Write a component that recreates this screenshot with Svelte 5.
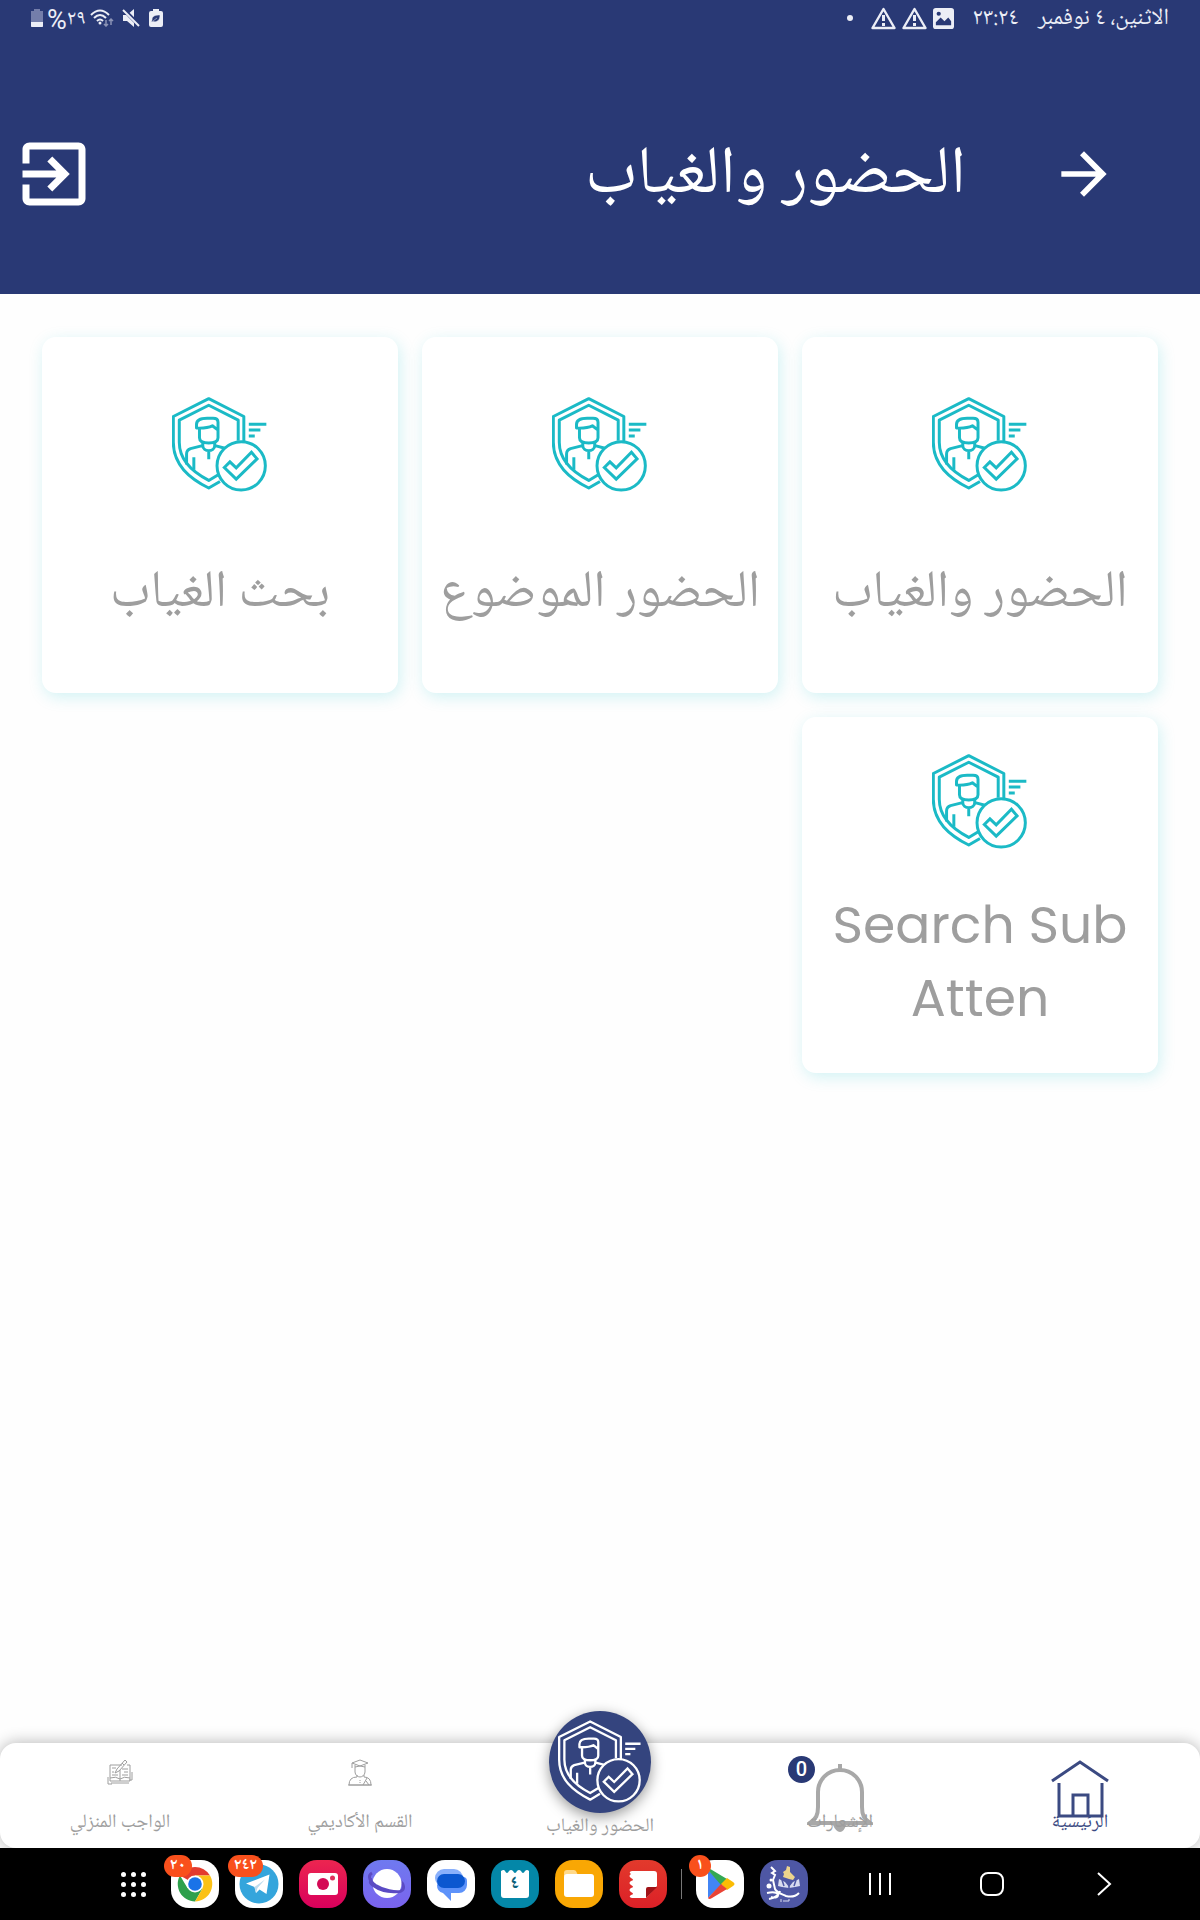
<script lang="ts">
  interface Card {
    title: string;
    latin?: boolean;
  }

  interface Tab {
    id: string;
    label: string;
    badge?: string;
  }

  interface DockApp {
    id: string;
    name: string;
    badge?: string;
  }

  const cards: Card[] = [
    { title: "الحضور والغياب" },
    { title: "الحضور الموضوع" },
    { title: "بحث الغياب" },
    { title: "Search Sub Atten", latin: true },
  ];

  const tabs: Tab[] = [
    { id: "home", label: "الرئيسية" },
    { id: "alerts", label: "الإشعارات", badge: "0" },
    { id: "attendance", label: "الحضور والغياب" },
    { id: "academic", label: "القسم الأكاديمي" },
    { id: "homework", label: "الواجب المنزلي" },
  ];

  const pinned: DockApp[] = [
    { id: "chrome", name: "Chrome", badge: "٢٠" },
    { id: "telegram", name: "Telegram", badge: "٢٤٢" },
    { id: "camera", name: "Camera" },
    { id: "internet", name: "Internet" },
    { id: "messages", name: "Messages" },
    { id: "calendar", name: "Calendar" },
    { id: "files", name: "Files" },
    { id: "notes", name: "Notes" },
  ];

  const recent: DockApp[] = [
    { id: "play", name: "Play Store", badge: "١" },
    { id: "school", name: "School" },
  ];
</script>

{#snippet shield()}
  <svg class="shield" viewBox="96 52 290 290" aria-hidden="true">
    <path d="M313 188V111L207 57 100 111v78c0 68 48 108 107 138l34-20" />
    <path d="M296 184V122L207 77 118 122v67c0 56 40 90 89 115l30-18" />
    <path d="M179 146h-9v-11c0-13 14-19 32-19h18c10 0 15 5 15 12v24l-17-13c-12 6-24 7-39 7v29c0 11 11 16 28 16s28-5 28-16v-27" />
    <path d="M189 190v9c0 9 9 15 18 15s18-6 18-15v-9M207 214v26M188 199l-36 9c-8 3-12 9-12 16v32M226 199l30 8M162 234v38" />
    <circle class="disc" cx="305" cy="260" r="73" />
    <path class="sharp" d="M254 265l17-17 19 18 46-47 17 20-63 61z" />
    <path d="M328 134h53M328 152h35M328 170h18" />
  </svg>
{/snippet}

{#snippet dockIcon(app: DockApp)}
  <button class="app {app.id}" aria-label={app.name}>
    {#if app.id === "chrome"}
      <svg viewBox="0 0 48 48">
        <path d="M24 24L9 15.400A17.500 17.500 0 0 1 39 15.400H24z" fill="#e33b2e" />
        <path d="M24 24l-7.400 4.300L9 15.400A17.500 17.500 0 0 0 24 41.500l7.500-13z" fill="#2da04c" />
        <path d="M39 15.400A17.500 17.500 0 0 1 24 41.500l7.500-13L24 15.400z" fill="#fbc116" />
        <circle cx="24" cy="24" r="8.500" fill="#fff" />
        <circle cx="24" cy="24" r="6.800" fill="#1a73e8" />
      </svg>
    {:else if app.id === "telegram"}
      <svg viewBox="0 0 48 48">
        <circle cx="24" cy="24" r="19.500" fill="#34a5dc" />
        <path d="M11 23.500L34.500 14.500 31.500 34 24.500 29.500 21 33 19.500 27z" fill="#fff" />
        <path d="M19.500 27L30 19.500 22.500 28 21 33z" fill="#bcdcee" />
      </svg>
    {:else if app.id === "camera"}
      <svg viewBox="0 0 48 48">
        <rect x="9" y="13" width="30" height="22" rx="3" fill="#fff" />
        <circle cx="24" cy="24" r="6" fill="#d40a55" />
        <circle cx="33.500" cy="18" r="2.500" fill="#e0305c" />
      </svg>
    {:else if app.id === "internet"}
      <svg viewBox="0 0 48 48">
        <path d="M9 13c-5 3-2 9 4 12 8 5 20 8 25 6 4-2 3-7-1-10" fill="none" stroke="#5b4bc4" stroke-width="3" />
        <circle cx="24" cy="23.500" r="14.500" fill="#fff" />
        <path d="M8 18c-1 3 2 5 5 7 8 5 19 7 25 6l-2 1c-9 1-19-1-26-6-3-2-4-5-2-8z" fill="#5b4bc4" stroke="#5b4bc4" stroke-width="2" />
      </svg>
    {:else if app.id === "messages"}
      <svg viewBox="0 0 48 48">
        <rect x="8" y="9" width="28" height="18" rx="9" fill="#8ab0fb" />
        <path d="M16 17h20a4 4 0 0 1 4 4v4a8 8 0 0 1-8 8h-8v8l-8-8a8 8 0 0 1-6-8z" fill="#5d92fa" />
        <rect x="10" y="14" width="28" height="14" rx="7" fill="#0b57d0" />
      </svg>
    {:else if app.id === "calendar"}
      <svg viewBox="0 0 48 48">
        <path d="M10 11q3-2 4 0 2 4 4 0 2-2 4 0 2 4 4 0 2-2 4 0 2 4 4 0 2-2 4 0v24q0 3-3 3H13q-3 0-3-3z" fill="#fff" />
      </svg>
      <span class="day">٤</span>
    {:else if app.id === "files"}
      <svg viewBox="0 0 48 48">
        <path d="M9 13q0-3 3-3h7q2 0 3 3l1 3H9z" fill="#ffd98a" />
        <rect x="9" y="14" width="30" height="23" rx="3" fill="#fff" />
      </svg>
    {:else if app.id === "notes"}
      <svg viewBox="0 0 48 48">
        <path d="M13 11h22q3 0 3 3v12L27 38H13q-4-1-1-3 4-1 0-3-3-2 0-4 4-1 0-3-3-2 0-4 4-1 0-3-3-2 0-4-3-2 1-3z" fill="#fff" />
        <path d="M27 38V29q0-2 2-2h9z" fill="#a01217" />
      </svg>
    {:else if app.id === "play"}
      <svg viewBox="0 0 48 48">
        <path d="M12 10v28l14-14z" fill="#4285f4" />
        <path d="M12 10q1-2 4 0l15 9-6 6z" fill="#34a853" />
        <path d="M31 18l6 4q3 2 0 4l-6 4-6-6z" fill="#fbbc04" />
        <path d="M12 38q1 2 4 0l15-9-6-5z" fill="#ea4335" />
      </svg>
    {:else}
      <svg viewBox="0 0 48 48">
        <path d="M27 6l3 1v5l5 5-2 3-4-1-6-2 1-3-1-2 3-2z" fill="#ecd48c" />
        <path d="M19 19l6 3 4 5 4-5 6-3 1 7-5 1-6 1-7-1-4-1z" fill="#d9dcf0" />
        <path d="M29 28v-8M22 20l2 6M36 20l-2 6" fill="none" stroke="#4e57a4" stroke-width="1.500" />
        <path d="M11 7l4 4-3 2 3 2-2 5 2 9c2 4 7 5 11 7 4 1 9 1 13-3" fill="none" stroke="#fff" stroke-width="2" />
        <path d="M7 33c5-1 10-1 11 2 0 3-4 3-7 2M9 39c5-1 10-4 11-8" fill="none" stroke="#fff" stroke-width="2" />
        <circle cx="9" cy="26" r="2.500" fill="#fff" />
        <circle cx="11" cy="20" r="1.500" fill="#fff" />
        <path d="M21 39v3M23 41h6v-2" fill="none" stroke="#d9dcf0" stroke-width="1" />
      </svg>
    {/if}
    {#if app.badge}
      <span class="count">{app.badge}</span>
    {/if}
  </button>
{/snippet}

<div class="screen" dir="rtl">
  <header>
    <div class="status">
      <div class="status-group">
        <span>الاثنين، ٤ نوفمبر</span>
        <span class="time">٢٣:٢٤</span>
        <svg class="picture" viewBox="0 0 22 22" aria-hidden="true">
          <rect width="22" height="22" rx="3" fill="currentColor" />
          <circle cx="6" cy="6" r="2.200" fill="#293975" />
          <path d="M3 18v-3l5-5 4 4 4-4 3 4v4z" fill="#293975" />
        </svg>
        {#each Array(2) as _}
          <svg class="warning" viewBox="0 0 25 23" aria-hidden="true">
            <path d="M12.500 2L23.500 21h-22z" fill="none" stroke="currentColor" stroke-width="2.400" stroke-linejoin="round" />
            <path d="M12.500 8v6M12.500 16v3" stroke="currentColor" stroke-width="3" />
          </svg>
        {/each}
        <i class="more"></i>
      </div>
      <div class="status-group system">
        <svg class="saver" viewBox="0 0 14 18" aria-hidden="true">
          <path d="M4 0h6v2h2q2 0 2 2v12q0 2-2 2H2q-2 0-2-2V4q0-2 2-2h2z" fill="currentColor" />
          <path d="M11 6c-5 0-8 1-8 5q0 1-1 2l2-.5c4 1 7-1 7-6.500zM4 12l4-3" fill="#293975" stroke="currentColor" stroke-width=".5" />
        </svg>
        <svg class="mute" viewBox="0 0 18 18" aria-hidden="true">
          <path d="M1 6h4l7-6v18l-7-6H1z" fill="currentColor" />
          <path d="M1 0l17 17" stroke="#293975" stroke-width="4" />
          <path d="M1 1l16 16" stroke="currentColor" stroke-width="2" />
        </svg>
        <svg class="wifi" viewBox="0 0 25 18" aria-hidden="true">
          <path d="M1 6q9-9 18 0M4 9q6-6 12 0M7 12q3-3 6 0" fill="none" stroke="currentColor" stroke-width="2" />
          <circle cx="10" cy="14" r="1.500" fill="currentColor" />
          <path d="M16 11v6m-2-2l2 2 2-2M21 16v-6m-2 2l2-2 2 2" fill="none" stroke="#8b93b5" stroke-width="1.500" />
        </svg>
        <span class="level">٢٩<span class="percent">%</span></span>
        <svg class="battery" viewBox="0 0 12 18" aria-hidden="true">
          <path d="M3 0h6v2h3v16H0V2h3z" fill="#747eaa" />
          <path d="M0 13h12v4q0 1-1 1H1q-1 0-1-1z" fill="currentColor" />
        </svg>
      </div>
    </div>
    <div class="app-bar">
      <button class="back" aria-label="رجوع">
        <svg viewBox="0 0 24 24"><path d="M12 4l-1.410 1.410L16.170 11H4v2h12.170l-5.580 5.590L12 20l8-8z" /></svg>
      </button>
      <h1>الحضور والغياب</h1>
      <button class="exit" aria-label="خروج">
        <svg viewBox="0 0 24 24">
          <path d="M10.090 15.590L11.500 17l5-5-5-5-1.410 1.410L12.670 11H3v2h9.670l-2.580 2.590zM19 3H5c-1.110 0-2 .9-2 2v4h2V5h14v14H5v-4H3v4c0 1.100.89 2 2 2h14c1.100 0 2-.9 2-2V5c0-1.100-.9-2-2-2z" />
        </svg>
      </button>
    </div>
  </header>

  <main>
    {#each cards as card}
      <button class="card">
        {@render shield()}
        <span class="card-title" class:latin={card.latin}>{card.title}</span>
      </button>
    {/each}
  </main>

  <nav class="tabs">
    {#each tabs as tab}
      <button class="tab {tab.id}">
        <span class="tab-icon">
          {#if tab.id === "home"}
            <svg viewBox="0 0 58 60">
              <path d="M1 22L29 3l28 19M8 24v33h43V24M22 57V36h15v21" />
            </svg>
          {:else if tab.id === "alerts"}
            <svg viewBox="0 0 66 68">
              <path d="M33 0v5" />
              <path d="M3 59C9 55 11 51 11 43V28a22 22 0 0 1 44 0v15c0 8 2 12 8 16z" />
              <path class="clapper" d="M26 61h13q-2 7-6 7t-7-7z" />
            </svg>
          {:else if tab.id === "attendance"}
            {@render shield()}
          {:else if tab.id === "academic"}
            <svg viewBox="0 0 24 26">
              <path d="M4 4l8-3 8 3-8 3zM4 4v5M7 6v7c0 3 3 5 5 5s5-2 5-5V6M7 8q5-2 10 0M9 16v2q-8 0-8 8h22q0-8-7-8v-2M12 21v1M12 23v1M19 19l-4 7M18 22l3 4M0 26h24" />
            </svg>
          {:else}
            <svg viewBox="0 0 26 26">
              <path d="M15 6H3v16h20V6h-3M13 22V11M3 19q6-2 10 1 4-3 10-1M1 18v7h4M25 13v8h-3M8 14l2-4L18 1l2 2-8 9zM15 4l2 2M5 9h4M5 13h2M5 16h6M15 10h6M17 13h4M15 16h6M4 24h18" />
            </svg>
          {/if}
        </span>
        <span class="tab-label">{tab.label}</span>
        {#if tab.badge}
          <span class="badge">{tab.badge}</span>
        {/if}
      </button>
    {/each}
  </nav>

  <footer class="dock" dir="ltr">
    <div class="apps">
      <button class="launcher" aria-label="Apps">
        {#each Array(9) as _}
          <i></i>
        {/each}
      </button>
      {#each pinned as app}
        {@render dockIcon(app)}
      {/each}
    </div>
    <span class="divider"></span>
    <div class="apps">
      {#each recent as app}
        {@render dockIcon(app)}
      {/each}
    </div>
    <div class="keys">
      <button aria-label="Recents"><svg viewBox="0 0 24 24"><path d="M2 1v22M12 1v22M22 1v22" /></svg></button>
      <button aria-label="Home"><svg viewBox="0 0 24 24"><rect x="1" y="1" width="22" height="22" rx="7" /></svg></button>
      <button aria-label="Back"><svg viewBox="0 0 24 24"><path d="M6 1l12 11L6 23" /></svg></button>
    </div>
  </footer>
</div>

<style>
  :global(body) {
    margin: 0;
    background: #fefefe;
  }
  .screen {
    display: flex;
    flex-direction: column;
    min-height: 100vh;
    font-family: "Noto Naskh Arabic", "Noto Sans Arabic", "DejaVu Sans", sans-serif;
  }
  button {
    padding: 0;
    border: none;
    background: none;
    color: inherit;
    font: inherit;
    cursor: pointer;
  }
  svg {
    display: block;
    flex: none;
  }

  header {
    background: #293975;
    color: #fff;
  }
  .status {
    display: flex;
    justify-content: space-between;
    height: 36px;
    padding: 0 31px;
    color: #eceef6;
    font-size: 23px;
  }
  .status-group {
    display: flex;
    align-items: center;
    gap: 6px;
  }
  .status-group span {
    padding-top: 2px;
  }
  .time {
    margin: 0 13px;
  }
  .picture {
    width: 21px;
  }
  .warning {
    width: 25px;
  }
  .more {
    width: 6px;
    height: 6px;
    margin-right: 12px;
    border-radius: 50%;
    background: currentColor;
  }
  .system {
    gap: 4px;
  }
  .saver {
    width: 14px;
    margin-left: 5px;
  }
  .mute {
    width: 18px;
    margin-left: 3px;
  }
  .wifi {
    width: 25px;
  }
  .level {
    display: flex;
    align-items: center;
    font-size: 21px;
  }
  .percent {
    font-family: Roboto, sans-serif;
    font-size: 27px;
  }
  .battery {
    width: 12px;
  }
  .app-bar {
    display: flex;
    align-items: center;
    min-height: 240px;
    padding: 18px 82px 0 12px;
  }
  .app-bar svg {
    fill: currentColor;
  }
  .back svg {
    width: 68px;
  }
  h1 {
    flex: 1;
    margin: 0 84px 0 0;
    padding-top: 6px;
    font-size: 67px;
    font-weight: 400;
    line-height: 80px;
  }
  .exit svg {
    width: 84px;
  }

  main {
    flex: 1;
    display: grid;
    grid-template-columns: repeat(3, 1fr);
    align-content: start;
    gap: 24px;
    padding: 43px 42px;
  }
  .card {
    --disc: #fff;
    display: flex;
    flex-direction: column;
    align-items: center;
    justify-content: space-evenly;
    aspect-ratio: 1;
    padding: 0 16px 2px;
    border-radius: 14px;
    background: #fff;
    color: #1bbac6;
    box-shadow: 2px 4px 16px rgba(0, 190, 200, 0.18);
  }
  .shield {
    width: 96px;
    fill: none;
    stroke: currentColor;
    stroke-width: 9;
    stroke-linejoin: round;
  }
  .disc {
    fill: var(--disc);
  }
  .sharp {
    stroke-linejoin: miter;
  }
  .card-title {
    padding-top: 6px;
    color: #9e9e9e;
    font-size: 52px;
    line-height: 73px;
  }
  .latin {
    padding-top: 0;
    font-family: Poppins, Inter, sans-serif;
  }

  .tabs {
    display: grid;
    grid-template-columns: repeat(5, 1fr);
    height: 105px;
    border-radius: 16px;
    background: #fff;
    box-shadow: 0 0 16px rgba(0, 0, 0, 0.3);
    color: #9e9e9e;
  }
  .tab {
    position: relative;
    display: flex;
    flex-direction: column;
    align-items: center;
    padding-top: 16px;
  }
  .tab-icon {
    display: flex;
    justify-content: center;
    align-items: flex-start;
    height: 60px;
  }
  .tab-icon svg {
    fill: none;
    stroke: currentColor;
  }
  .tab-label {
    margin-top: -8px;
    font-size: 19px;
    line-height: 24px;
    white-space: nowrap;
  }
  .home {
    color: #3b4a82;
  }
  .home svg {
    width: 58px;
    stroke-width: 3;
  }
  .alerts svg {
    width: 66px;
    margin-top: 5px;
    stroke: #a8a8a8;
    stroke-width: 4;
  }
  .alerts .clapper {
    fill: #a8a8a8;
    stroke: none;
  }
  .academic svg {
    width: 24px;
    overflow: visible;
  }
  .homework svg {
    width: 26px;
  }
  .attendance {
    --disc: #34447e;
    padding-top: 22px;
  }
  .attendance .tab-icon {
    width: 102px;
    height: 102px;
    margin-top: -54px;
    border-radius: 50%;
    align-items: center;
    background: #34447e;
    color: #fff;
    box-shadow: 0 4px 14px rgba(0, 0, 0, 0.4);
  }
  .attendance .shield {
    width: 84px;
    stroke-width: 8;
  }
  .attendance .tab-label {
    margin-top: 2px;
  }
  .badge {
    position: absolute;
    top: 13px;
    left: 68px;
    width: 27px;
    border-radius: 50%;
    background: #293975;
    color: #fff;
    font: 500 20px/27px Roboto, sans-serif;
  }

  .dock {
    position: relative;
    display: flex;
    align-items: center;
    height: 72px;
    padding: 0 40px 0 111px;
    background: #000;
    color: #fff;
  }
  .apps {
    display: flex;
    align-items: center;
    gap: 16px;
  }
  .launcher {
    display: grid;
    grid-template-columns: repeat(3, 5px);
    gap: 5px;
    justify-content: center;
    width: 44px;
  }
  .launcher i {
    height: 5px;
    border-radius: 50%;
    background: #fff;
  }
  .app {
    position: relative;
    width: 48px;
    height: 48px;
    border-radius: 18px;
    background: #fff;
  }
  .camera {
    background: linear-gradient(#ec2550, #d9005c);
  }
  .internet {
    background: linear-gradient(#6f7af0, #7a63ee);
  }
  .calendar {
    background: #0487a8;
  }
  .files {
    background: #f9a704;
  }
  .notes {
    background: linear-gradient(#e23a2c, #dc2027);
  }
  .school {
    background: #4e57a4;
  }
  .day {
    position: absolute;
    inset: 12px 0 0;
    color: #0b6079;
    font-size: 18px;
    font-weight: 700;
    line-height: 24px;
  }
  .count {
    position: absolute;
    top: -5px;
    left: -7px;
    min-width: 10px;
    padding: 0 6px;
    border-radius: 11px;
    background: #f9501c;
    color: #fff;
    font-size: 16px;
    font-weight: 700;
    line-height: 22px;
  }
  .divider {
    width: 1px;
    height: 30px;
    margin: 0 14px;
    background: #777;
  }
  .keys {
    display: grid;
    grid-template-columns: repeat(3, 112px);
    margin-left: auto;
  }
  .keys svg {
    width: 24px;
    margin: auto;
    fill: none;
    stroke: #fff;
    stroke-width: 2;
  }
</style>
